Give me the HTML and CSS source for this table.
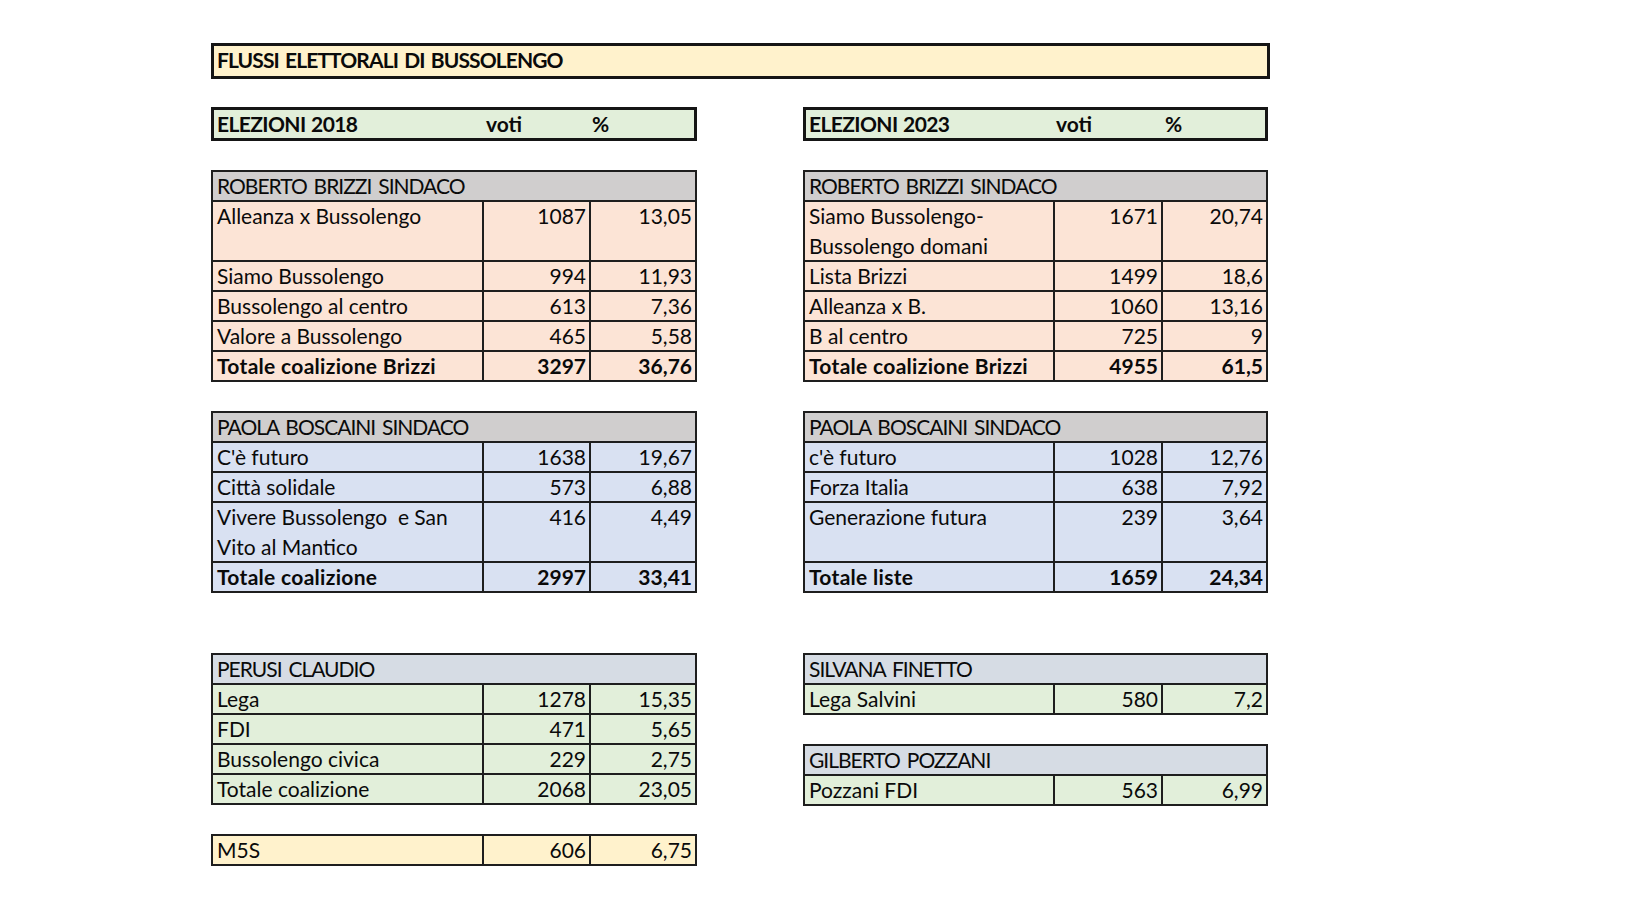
FILE: index.html
```html
<!DOCTYPE html>
<html lang="it">
<head>
<meta charset="utf-8">
<title>Flussi elettorali di Bussolengo</title>
<link rel="stylesheet" href="styles.css">
</head>
<body>
<div class="sheet">
  <div class="title">FLUSSI ELETTORALI DI BUSSOLENGO</div>
  <div class="cols">
    <div class="col col-left">
      <div class="headbox"><span class="caps">ELEZIONI 2018</span><span>voti</span><span>%</span></div>

      <div class="tbl gap-30">
        <div class="row head gray">ROBERTO BRIZZI SINDACO</div>
        <div class="row orange tall"><span class="wrap">Alleanza x Bussolengo</span><span class="num">1087</span><span class="num">13,05</span></div>
        <div class="row orange"><span>Siamo Bussolengo</span><span class="num">994</span><span class="num">11,93</span></div>
        <div class="row orange"><span>Bussolengo al centro</span><span class="num">613</span><span class="num">7,36</span></div>
        <div class="row orange"><span>Valore a Bussolengo</span><span class="num">465</span><span class="num">5,58</span></div>
        <div class="row orange bold"><span>Totale coalizione Brizzi</span><span class="num">3297</span><span class="num">36,76</span></div>
      </div>

      <div class="tbl gap-30">
        <div class="row head gray">PAOLA BOSCAINI SINDACO</div>
        <div class="row blue"><span>C'è futuro</span><span class="num">1638</span><span class="num">19,67</span></div>
        <div class="row blue"><span>Città solidale</span><span class="num">573</span><span class="num">6,88</span></div>
        <div class="row blue tall"><span class="wrap">Vivere Bussolengo&nbsp; e San Vito al Mantico</span><span class="num">416</span><span class="num">4,49</span></div>
        <div class="row blue bold"><span>Totale coalizione</span><span class="num">2997</span><span class="num">33,41</span></div>
      </div>

      <div class="tbl gap-60">
        <div class="row head slate">PERUSI CLAUDIO</div>
        <div class="row green"><span>Lega</span><span class="num">1278</span><span class="num">15,35</span></div>
        <div class="row green"><span>FDI</span><span class="num">471</span><span class="num">5,65</span></div>
        <div class="row green"><span>Bussolengo civica</span><span class="num">229</span><span class="num">2,75</span></div>
        <div class="row green"><span>Totale coalizione</span><span class="num">2068</span><span class="num">23,05</span></div>
      </div>

      <div class="tbl gap-30">
        <div class="row cream"><span>M5S</span><span class="num">606</span><span class="num">6,75</span></div>
      </div>
    </div>

    <div class="col col-right">
      <div class="headbox"><span class="caps">ELEZIONI 2023</span><span>voti</span><span>%</span></div>

      <div class="tbl gap-30">
        <div class="row head gray">ROBERTO BRIZZI SINDACO</div>
        <div class="row orange tall"><span class="wrap">Siamo Bussolengo-<br>Bussolengo domani</span><span class="num">1671</span><span class="num">20,74</span></div>
        <div class="row orange"><span>Lista Brizzi</span><span class="num">1499</span><span class="num">18,6</span></div>
        <div class="row orange"><span>Alleanza x B.</span><span class="num">1060</span><span class="num">13,16</span></div>
        <div class="row orange"><span>B al centro</span><span class="num">725</span><span class="num">9</span></div>
        <div class="row orange bold"><span>Totale coalizione Brizzi</span><span class="num">4955</span><span class="num">61,5</span></div>
      </div>

      <div class="tbl gap-30">
        <div class="row head gray">PAOLA BOSCAINI SINDACO</div>
        <div class="row blue"><span>c'è futuro</span><span class="num">1028</span><span class="num">12,76</span></div>
        <div class="row blue"><span>Forza Italia</span><span class="num">638</span><span class="num">7,92</span></div>
        <div class="row blue tall"><span class="wrap">Generazione futura</span><span class="num">239</span><span class="num">3,64</span></div>
        <div class="row blue bold"><span>Totale liste</span><span class="num">1659</span><span class="num">24,34</span></div>
      </div>

      <div class="tbl gap-60">
        <div class="row head slate">SILVANA FINETTO</div>
        <div class="row green"><span>Lega Salvini</span><span class="num">580</span><span class="num">7,2</span></div>
      </div>

      <div class="tbl gap-30">
        <div class="row head slate">GILBERTO POZZANI</div>
        <div class="row green"><span>Pozzani FDI</span><span class="num">563</span><span class="num">6,99</span></div>
      </div>
    </div>
  </div>
</div>
</body>
</html>
```

FILE: styles.css
```css
* { box-sizing: border-box; }

html, body {
  margin: 0;
  padding: 0;
  background: #ffffff;
}

body {
  font-family: Lato, "Liberation Sans", sans-serif;
  font-size: 21px;
  color: #0a0a0a;
}

.sheet {
  padding: 43px 0 0 211px;
}

.title {
  width: 1059px;
  height: 36px;
  border: 3px solid #151515;
  background: #fff2cc;
  font-weight: 700;
  line-height: 28px;
  padding: 0 3px;
  letter-spacing: -0.9px;
  word-spacing: 2px;
}

.cols {
  display: flex;
  gap: 106px;
  margin-top: 28px;
}

.col-left { width: 486px; }
.col-right { width: 465px; }

.headbox {
  display: grid;
  height: 34px;
  border: 3px solid #151515;
  background: #e2efda;
  font-weight: 700;
  line-height: 28px;
}
.col-left .headbox { grid-template-columns: 269px 106px 1fr; }
.col-right .headbox { grid-template-columns: 247px 109px 1fr; }
.headbox span { padding-left: 3px; }
.headbox .caps { letter-spacing: -0.6px; word-spacing: 1px; }

.tbl {
  border: 2px solid #1e1e1e;
}
.gap-30 { margin-top: 29px; }
.gap-60 { margin-top: 60px; }

.row {
  display: grid;
  height: 30px;
  border-top: 2px solid #1e1e1e;
  line-height: 28px;
}
.row:first-child {
  border-top: 0;
  height: 28px;
}
.col-left .row { grid-template-columns: 269px 107px 1fr; }
.col-right .row { grid-template-columns: 248px 108px 1fr; }

.row.tall { height: 60px; }

.row > span {
  padding: 0 3px 0 4px;
}
.row > span + span {
  border-left: 2px solid #1e1e1e;
}
.row .num { text-align: right; }

.row .wrap {
  line-height: 30px;
  margin-top: -1px;
}

.row.head {
  display: block;
  padding-left: 4px;
  letter-spacing: -1px;
  word-spacing: 2.5px;
}

.bold { font-weight: 700; }
.bold > span:first-child { letter-spacing: 0.3px; }

.gray { background: #d0cece; }
.slate { background: #d6dce4; }
.orange { background: #fce4d6; }
.blue { background: #d9e1f2; }
.green { background: #e2efda; }
.cream { background: #fff2cc; }
```
